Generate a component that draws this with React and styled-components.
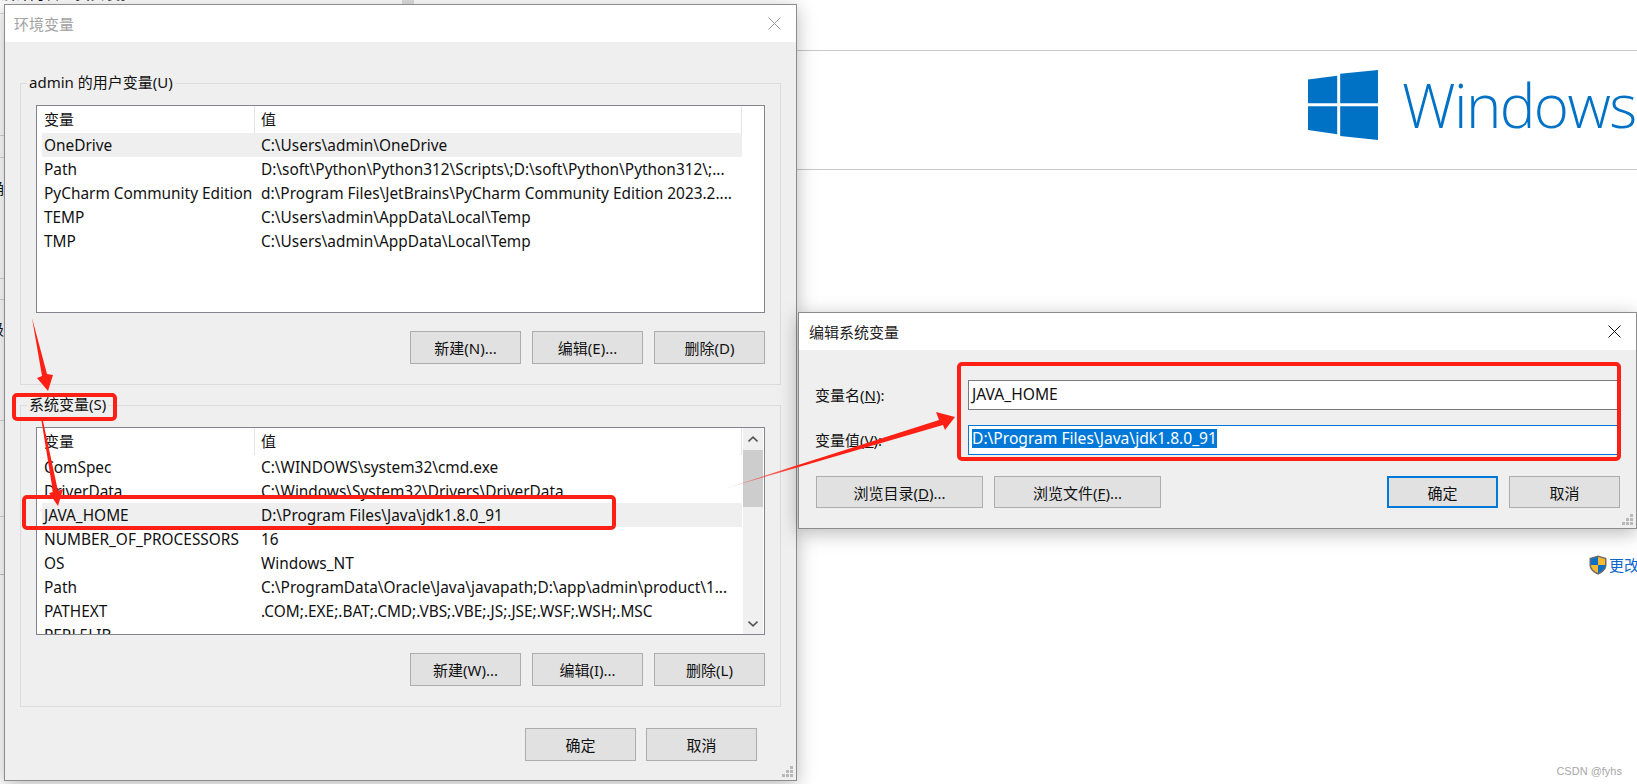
import React from "react";
import styled, { createGlobalStyle } from "styled-components";

const FONT = `"Noto Sans", "Noto Sans CJK SC", sans-serif`;

const GlobalStyle = createGlobalStyle`
  html, body {
    margin: 0;
    padding: 0;
    background: #fff;
  }
  * { box-sizing: border-box; }
`;

const Desktop = styled.div`
  position: relative;
  width: 1637px;
  height: 784px;
  overflow: hidden;
  background: #fff;
  font-family: ${FONT};
  font-size: 15.4px;
  color: #111;
`;

/* windows sitting behind the dialogs */
const BackWindow = styled.div`
  position: absolute;
  left: 0;
  top: 0;
  width: 415px;
  height: 575px;
  overflow: hidden;
  background: #fff;
  border-bottom: 1px solid #c4c4c4;
`;
const BackRow = styled.div`
  height: ${({ $h }) => $h}px;
  padding-top: ${({ $pad }) => $pad || 0}px;
  border-bottom: 1px solid #d8d8d8;
  font-size: 15px;
  line-height: 20px;
  white-space: nowrap;
  span {
    display: block;
    margin-left: ${({ $indent }) => $indent || 0}px;
    margin-top: ${({ $lift }) => $lift || 0}px;
  }
`;
const BackThumb = styled.div`
  position: absolute;
  left: 402px;
  top: 0;
  width: 12px;
  height: 12px;
  background: #dedede;
`;
const SettingsWindow = styled.div`
  position: absolute;
  left: 415px;
  right: 0;
  top: 0;
  bottom: 0;
  display: flex;
  flex-direction: column;
  overflow: hidden;
`;
const TopGap = styled.div`
  height: 51px;
  flex: none;
  border-bottom: 1px solid #c8c8c8;
`;
const Banner = styled.div`
  height: 119px;
  flex: none;
  padding: 0 0 10px 893px;
  display: flex;
  align-items: center;
  gap: 24px;
  border-bottom: 1px solid #c8c8c8;
  svg { flex: none; }
`;
const BrandText = styled.div`
  flex: none;
  font-family: "Open Sans", sans-serif;
  font-weight: 350;
  font-size: 60px;
  letter-spacing: -1.6px;
  line-height: 70px;
  color: #0072c6;
  white-space: nowrap;
`;
const LinkRow = styled.div`
  padding: 385px 0 0 1174px;
  display: flex;
  align-items: center;
  gap: 2px;
  white-space: nowrap;
  color: #0a66cc;
  font-size: 15px;
  line-height: 20px;
  svg { flex: none; }
`;
const Watermark = styled.div`
  position: absolute;
  right: 15px;
  bottom: 6px;
  font-family: "Liberation Sans", sans-serif;
  font-size: 11px;
  line-height: 14px;
  color: #a8a8a8;
`;

/* dialogs */
const Dialog = styled.div`
  position: absolute;
  left: ${({ $x }) => $x}px;
  top: ${({ $y }) => $y}px;
  width: ${({ $w }) => $w}px;
  height: ${({ $h }) => $h}px;
  display: flex;
  flex-direction: column;
  background: #efefef;
  border: 1px solid #8c8c8c;
  box-shadow: 0 4px 18px rgba(0, 0, 0, 0.28);
`;
const TitleBar = styled.div`
  height: 37px;
  flex: none;
  background: #fff;
  display: flex;
  align-items: center;
  justify-content: space-between;
  padding: 0 ${({ $right }) => $right}px 1px ${({ $left }) => $left}px;
  font-size: 15px;
  color: ${({ $inactive }) => ($inactive ? "#a2a2a2" : "#222")};
`;
const DialogBody = styled.div`
  flex: 1;
  padding: 31px 15px 0;
`;
const Group = styled.fieldset`
  margin: 0 0 10px;
  padding: 12px 15px 20px;
  min-width: 0;
  border: 1px solid #dcdcdc;
`;
const GroupTitle = styled.legend`
  padding: 0 2px;
  margin-left: -9px;
  height: 20px;
  line-height: 19px;
  font-size: 15px;
  color: #111;
`;
const ListBox = styled.div`
  height: 208px;
  display: flex;
  overflow: hidden;
  background: #fff;
  border: 1px solid #82868c;
  padding-left: 5px;
`;
const ListInner = styled.div`
  width: 700px;
  flex: none;
`;
const ListHeader = styled.div`
  height: 27px;
  display: grid;
  grid-template-columns: 213px 1fr;
  line-height: 27px;
  border-right: 1px solid #e5e5e5;
`;
const HeaderCell = styled.div`
  padding-left: ${({ $pad }) => $pad}px;
  font-size: 15px;
  border-right: ${({ $divider }) => ($divider ? "1px solid #e5e5e5" : "none")};
`;
const ListRow = styled.div`
  height: 24px;
  display: grid;
  grid-template-columns: 213px 1fr;
  line-height: 26px;
  white-space: nowrap;
  background: ${({ $active }) => ($active ? "#efefef" : "transparent")};
`;
const NameCell = styled.div`
  padding-left: 2px;
`;
const ValueCell = styled.div`
  padding-left: 6px;
`;
const ScrollBar = styled.div`
  width: 20px;
  margin-left: 1px;
  flex: none;
  display: flex;
  flex-direction: column;
  background: #f0f0f0;
`;
const ScrollArrow = styled.div`
  height: 22px;
  flex: none;
  display: flex;
  align-items: center;
  justify-content: center;
`;
const ScrollThumb = styled.div`
  height: 57px;
  flex: none;
  background: #cdcdcd;
`;
const ScrollTrack = styled.div`
  flex: 1;
`;
const ButtonRow = styled.div`
  display: flex;
  justify-content: ${({ $between }) => ($between ? "space-between" : "flex-end")};
  gap: ${({ $gap }) => $gap || 0}px;
  margin-top: ${({ $top }) => $top}px;
  padding: 0 ${({ $right }) => $right || 0}px 0 ${({ $left }) => $left || 0}px;
`;
const ButtonSet = styled.div`
  display: flex;
  gap: 11px;
`;
const Btn = styled.div`
  width: ${({ $w }) => $w || 111}px;
  height: ${({ $h }) => $h || 33}px;
  display: flex;
  align-items: center;
  justify-content: center;
  background: #e1e1e1;
  border: ${({ $focus }) => ($focus ? "2px solid #0078d7" : "1px solid #adadad")};
  font-size: 15px;
  white-space: nowrap;
  color: #111;
`;
const Grip = styled.svg`
  position: absolute;
  right: 2px;
  bottom: 2px;
`;

/* edit dialog */
const EditBody = styled.div`
  flex: 1;
  padding: 30px 0 0;
`;
const FieldGrid = styled.div`
  display: grid;
  grid-template-columns: 153px 1fr;
  row-gap: 15px;
  padding: 0 18px 0 16px;
  align-items: center;
`;
const FieldLabel = styled.label`
  font-size: 15px;
  line-height: 20px;
  margin-bottom: 1px;
`;
const FieldBox = styled.div`
  height: 30px;
  display: flex;
  align-items: center;
  padding: 0 0 3px 3px;
  font-size: 15.6px;
  background: #fff;
  border: 1px solid ${({ $focus }) => ($focus ? "#0078d7" : "#7a7a7a")};
  white-space: nowrap;
`;
const Selected = styled.span`
  display: block;
  height: 19px;
  line-height: 19px;
  background: #0078d7;
  color: #fff;
`;
const Annotations = styled.svg`
  position: absolute;
  left: 0;
  top: 0;
  pointer-events: none;
`;

const userVars = [
  ["OneDrive", "C:\\Users\\admin\\OneDrive", true],
  ["Path", "D:\\soft\\Python\\Python312\\Scripts\\;D:\\soft\\Python\\Python312\\;..."],
  ["PyCharm Community Edition", "d:\\Program Files\\JetBrains\\PyCharm Community Edition 2023.2...."],
  ["TEMP", "C:\\Users\\admin\\AppData\\Local\\Temp"],
  ["TMP", "C:\\Users\\admin\\AppData\\Local\\Temp"],
];
const systemVars = [
  ["ComSpec", "C:\\WINDOWS\\system32\\cmd.exe"],
  ["DriverData", "C:\\Windows\\System32\\Drivers\\DriverData"],
  ["JAVA_HOME", "D:\\Program Files\\Java\\jdk1.8.0_91", true],
  ["NUMBER_OF_PROCESSORS", "16"],
  ["OS", "Windows_NT"],
  ["Path", "C:\\ProgramData\\Oracle\\Java\\javapath;D:\\app\\admin\\product\\1..."],
  ["PATHEXT", ".COM;.EXE;.BAT;.CMD;.VBS;.VBE;.JS;.JSE;.WSF;.WSH;.MSC"],
  ["PERL5LIB", ""],
];
const backRows = [
  { h: 31, text: "设计为管理员安装。", lift: -17 },
  { h: 122, pad: 25, text: "，", indent: -9 },
  { h: 22 },
  { h: 121, pad: 20, text: "确", indent: -11 },
  { h: 21 },
  { h: 121, pad: 19, text: "级", indent: -11 },
  { h: 96 },
];

const CloseIcon = ({ color }) => (
  <svg width="13" height="13" viewBox="0 0 13 13">
    <path d="M0.5 0.5L12.5 12.5M12.5 0.5L0.5 12.5" stroke={color} strokeWidth="1" fill="none" />
  </svg>
);

const Chevron = ({ up }) => (
  <svg width="10" height="7" viewBox="0 0 10 7">
    <path d={up ? "M0.5 5.5L5 1.2L9.5 5.5" : "M0.5 1.5L5 5.8L9.5 1.5"} stroke="#555" strokeWidth="1.6" fill="none" />
  </svg>
);

const GripDots = () => (
  <Grip width="12" height="12" viewBox="0 0 12 12">
    <g fill="#b8b8b8">
      <rect x="8" y="0" width="3" height="3" />
      <rect x="4" y="4" width="3" height="3" />
      <rect x="8" y="4" width="3" height="3" />
      <rect x="0" y="8" width="3" height="3" />
      <rect x="4" y="8" width="3" height="3" />
      <rect x="8" y="8" width="3" height="3" />
    </g>
  </Grip>
);

const WindowsLogo = () => (
  <svg width="70" height="70" viewBox="0 0 211 211">
    <g fill="#0072c6">
      <polygon points="0,29 88,17 88,100 0,100" />
      <polygon points="97,11 211,0 211,100 97,100" />
      <polygon points="0,109 88,109 88,194 0,181" />
      <polygon points="97,109 211,109 211,211 97,199" />
    </g>
  </svg>
);

const Shield = () => (
  <svg width="18" height="20" viewBox="0 0 18 20">
    <path d="M9 0.5L17.5 3V10C17.5 15 13 18 9 19.8C5 18 0.5 15 0.5 10V3Z" fill="#6b6b6b" />
    <path d="M9 2L9 10H2V4Z" fill="#0a6fc9" />
    <path d="M9 2L16 4V10H9Z" fill="#f5b82e" />
    <path d="M2 10H9V18C5.5 16.4 2 14 2 10Z" fill="#f5b82e" />
    <path d="M9 10H16C16 14 12.5 16.4 9 18Z" fill="#0a6fc9" />
  </svg>
);

const VarList = ({ rows, scroll }) => (
  <ListBox>
    <ListInner>
      <ListHeader>
        <HeaderCell $pad={2} $divider>变量</HeaderCell>
        <HeaderCell $pad={6}>值</HeaderCell>
      </ListHeader>
      {rows.map(([name, value, active]) => (
        <ListRow key={name + value} $active={active}>
          <NameCell>{name}</NameCell>
          <ValueCell>{value}</ValueCell>
        </ListRow>
      ))}
    </ListInner>
    {scroll && (
      <ScrollBar>
        <ScrollArrow><Chevron up /></ScrollArrow>
        <ScrollThumb />
        <ScrollTrack />
        <ScrollArrow><Chevron /></ScrollArrow>
      </ScrollBar>
    )}
  </ListBox>
);

const App = () => (
  <Desktop>
    <GlobalStyle />
    <BackWindow>
      {backRows.map((r, i) => (
        <BackRow key={i} $h={r.h} $pad={r.pad} $indent={r.indent} $lift={r.lift}>
          {r.text && <span>{r.text}</span>}
        </BackRow>
      ))}
      <BackThumb />
    </BackWindow>
    <SettingsWindow>
      <TopGap />
      <Banner>
        <WindowsLogo />
        <BrandText>Windows</BrandText>
      </Banner>
      <LinkRow>
        <Shield />
        <span>更改设置</span>
      </LinkRow>
    </SettingsWindow>
    <Watermark>CSDN @fyhs</Watermark>

    <Dialog $x={4} $y={4} $w={793} $h={777}>
      <TitleBar $inactive $left={9} $right={15}>
        <span>环境变量</span>
        <CloseIcon color="#999" />
      </TitleBar>
      <DialogBody>
        <Group>
          <GroupTitle>admin 的用户变量(U)</GroupTitle>
          <VarList rows={userVars} />
          <ButtonRow $top={18} $gap={11}>
            <Btn>新建(N)...</Btn>
            <Btn>编辑(E)...</Btn>
            <Btn>删除(D)</Btn>
          </ButtonRow>
        </Group>
        <Group>
          <GroupTitle>系统变量(S)</GroupTitle>
          <VarList rows={systemVars} scroll />
          <ButtonRow $top={18} $gap={11}>
            <Btn>新建(W)...</Btn>
            <Btn>编辑(I)...</Btn>
            <Btn>删除(L)</Btn>
          </ButtonRow>
        </Group>
        <ButtonRow $top={21} $gap={10} $right={24}>
          <Btn>确定</Btn>
          <Btn>取消</Btn>
        </ButtonRow>
      </DialogBody>
      <GripDots />
    </Dialog>

    <Dialog $x={798} $y={312} $w={839} $h={217}>
      <TitleBar $left={10} $right={15}>
        <span>编辑系统变量</span>
        <CloseIcon color="#111" />
      </TitleBar>
      <EditBody>
        <FieldGrid>
          <FieldLabel>变量名(<u>N</u>):</FieldLabel>
          <FieldBox>JAVA_HOME</FieldBox>
          <FieldLabel>变量值(<u>V</u>):</FieldLabel>
          <FieldBox $focus>
            <Selected>D:\Program Files\Java\jdk1.8.0_91</Selected>
          </FieldBox>
        </FieldGrid>
        <ButtonRow $between $top={21} $left={17} $right={16}>
          <ButtonSet>
            <Btn $w={167} $h={32}><span>浏览目录(<u>D</u>)...</span></Btn>
            <Btn $w={167} $h={32}><span>浏览文件(<u>F</u>)...</span></Btn>
          </ButtonSet>
          <ButtonSet>
            <Btn $h={32} $focus>确定</Btn>
            <Btn $h={32}>取消</Btn>
          </ButtonSet>
        </ButtonRow>
      </EditBody>
      <GripDots />
    </Dialog>

    <Annotations width="1637" height="784" viewBox="0 0 1637 784">
      <defs>
        <linearGradient id="tailFade" gradientUnits="userSpaceOnUse" x1="720" y1="490" x2="800" y2="464">
          <stop offset="0" stopColor="#ff2015" stopOpacity="0.05" />
          <stop offset="1" stopColor="#ff2015" />
        </linearGradient>
      </defs>
      <g fill="none" stroke="#ff2015" strokeWidth="4">
        <rect x="14" y="395" width="101" height="24" rx="3" />
        <rect x="24" y="497" width="590" height="31" rx="3" />
        <rect x="959" y="364" width="660" height="95" rx="3" />
      </g>
      <polygon points="32,318 47,374 53,375 48,391 37,378 42,376" fill="#ff2015" />
      <polygon points="41.5,421 43,421 58,491 63,489 58,506 49,493 53,492" fill="#ff2015" />
      <polygon points="720,490 939,420 936,412 955,417 945,430 943,425" fill="url(#tailFade)" />
    </Annotations>
  </Desktop>
);

export default App;
